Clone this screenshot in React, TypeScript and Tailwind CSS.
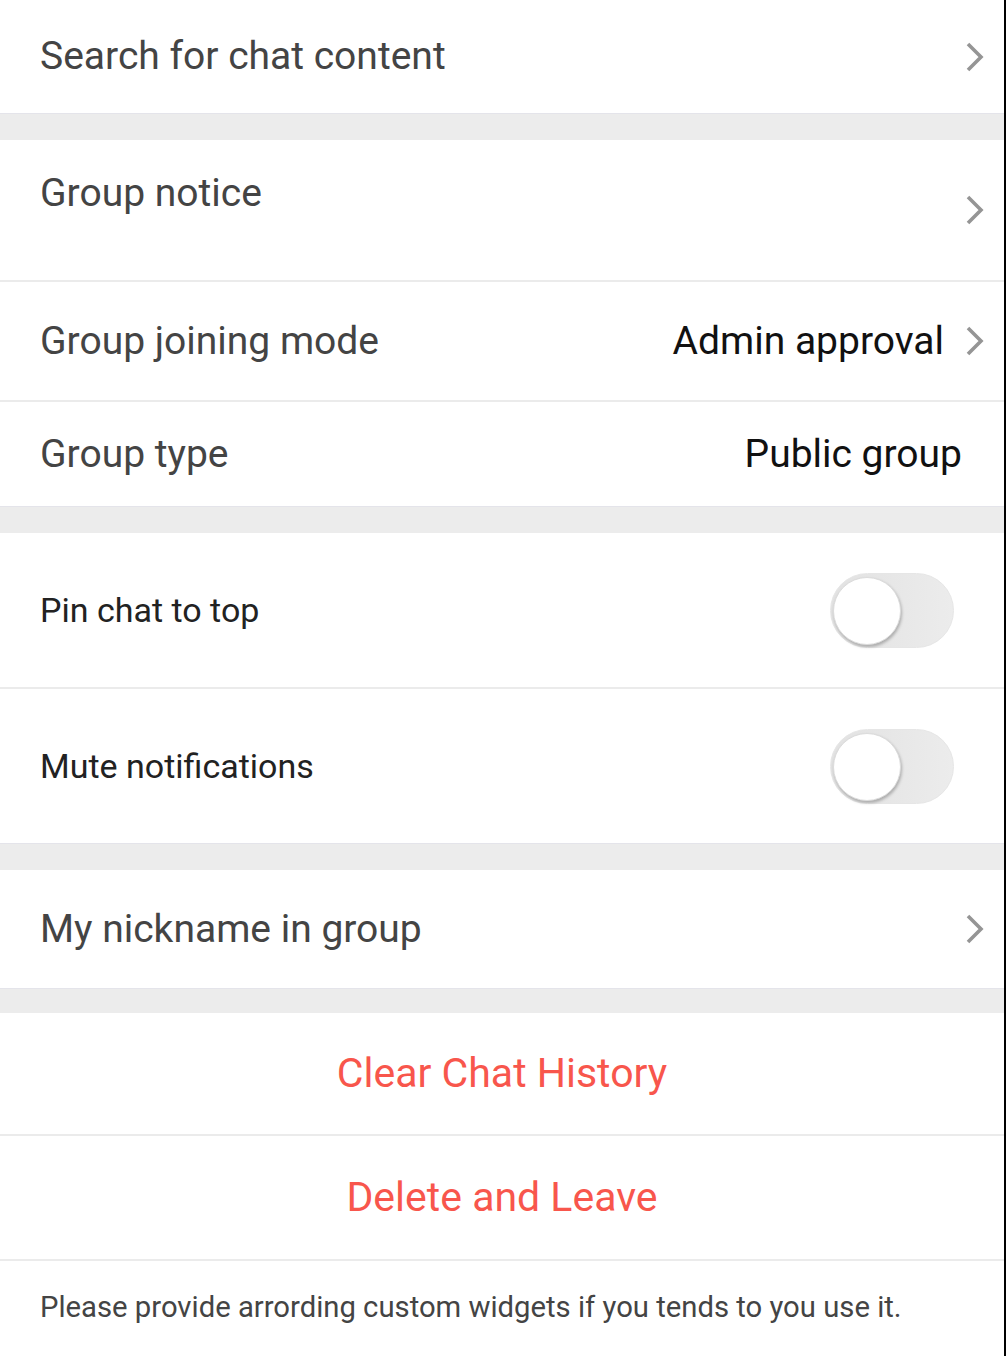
import React from "react";

const Chevron = () => (
  <svg width="22" height="32" viewBox="0 0 22 32" className="shrink-0">
    <path d="M4 3 L17 16 L4 29" fill="none" stroke="#959595" strokeWidth="3.6" />
  </svg>
);

const Toggle = () => (
  <div className="relative w-[124px] h-[75px] rounded-full bg-gradient-to-r from-[#e2e2e2] to-[#ececec] border border-[#e6e6e6]">
    <div className="absolute left-[2px] top-[3px] w-[68px] h-[68px] rounded-full bg-white shadow-[1px_2px_3px_rgba(0,0,0,0.25)] border border-[#dcdcdc]" />
  </div>
);

const Gap = ({ small }: { small?: boolean }) => (
  <div className={`${small ? "h-[25px]" : "h-[27px]"} bg-[#ececec] border-t border-[#e4e4ea]`} />
);

export default function App() {
  return (
    <div className="w-[1006px] h-[1356px] bg-white border-r-2 border-black font-['Roboto',sans-serif] overflow-hidden">
      <div className="h-[113px] flex items-center justify-between pl-10 pr-[18px]">
        <span className="text-[39px] text-[#444] whitespace-nowrap">Search for chat content</span>
        <Chevron />
      </div>
      <Gap />
      <div className="h-[142px] flex items-center justify-between pl-10 pr-[18px] border-b-2 border-[#ebebeb]">
        <span className="self-start mt-[24px] text-[39px] text-[#444]">Group notice</span>
        <Chevron />
      </div>
      <div className="h-[120px] flex items-center justify-between pl-10 pr-[18px] border-b-2 border-[#ebebeb]">
        <span className="text-[39px] text-[#444]">Group joining mode</span>
        <div className="flex items-center gap-5">
          <span className="text-[39px] text-[#111]">Admin approval</span>
          <Chevron />
        </div>
      </div>
      <div className="h-[104px] flex items-center justify-between pl-10 pr-[42px]">
        <span className="text-[39px] text-[#444]">Group type</span>
        <span className="text-[39px] text-[#111]">Public group</span>
      </div>
      <Gap />
      <div className="h-[156px] flex items-center justify-between pl-10 pr-[50px] border-b-2 border-[#ebebeb]">
        <span className="text-[34px] text-[#222]">Pin chat to top</span>
        <Toggle />
      </div>
      <div className="h-[154px] flex items-center justify-between pl-10 pr-[50px]">
        <span className="text-[34px] text-[#222]">Mute notifications</span>
        <Toggle />
      </div>
      <Gap />
      <div className="h-[118px] flex items-center justify-between pl-10 pr-[18px]">
        <span className="text-[39px] text-[#444]">My nickname in group</span>
        <Chevron />
      </div>
      <Gap small />
      <div className="h-[123px] flex items-center justify-center border-b-2 border-[#ebebeb]">
        <span className="text-[41px] text-[#f8564c] whitespace-nowrap">Clear Chat History</span>
      </div>
      <div className="h-[125px] flex items-center justify-center border-b-2 border-[#ebebeb]">
        <span className="text-[41px] text-[#f8564c] whitespace-nowrap">Delete and Leave</span>
      </div>
      <div className="h-[94px] flex items-center pl-10">
        <span className="text-[29.25px] text-[#444] whitespace-nowrap">Please provide arrording custom widgets if you tends to you use it.</span>
      </div>
    </div>
  );
}
